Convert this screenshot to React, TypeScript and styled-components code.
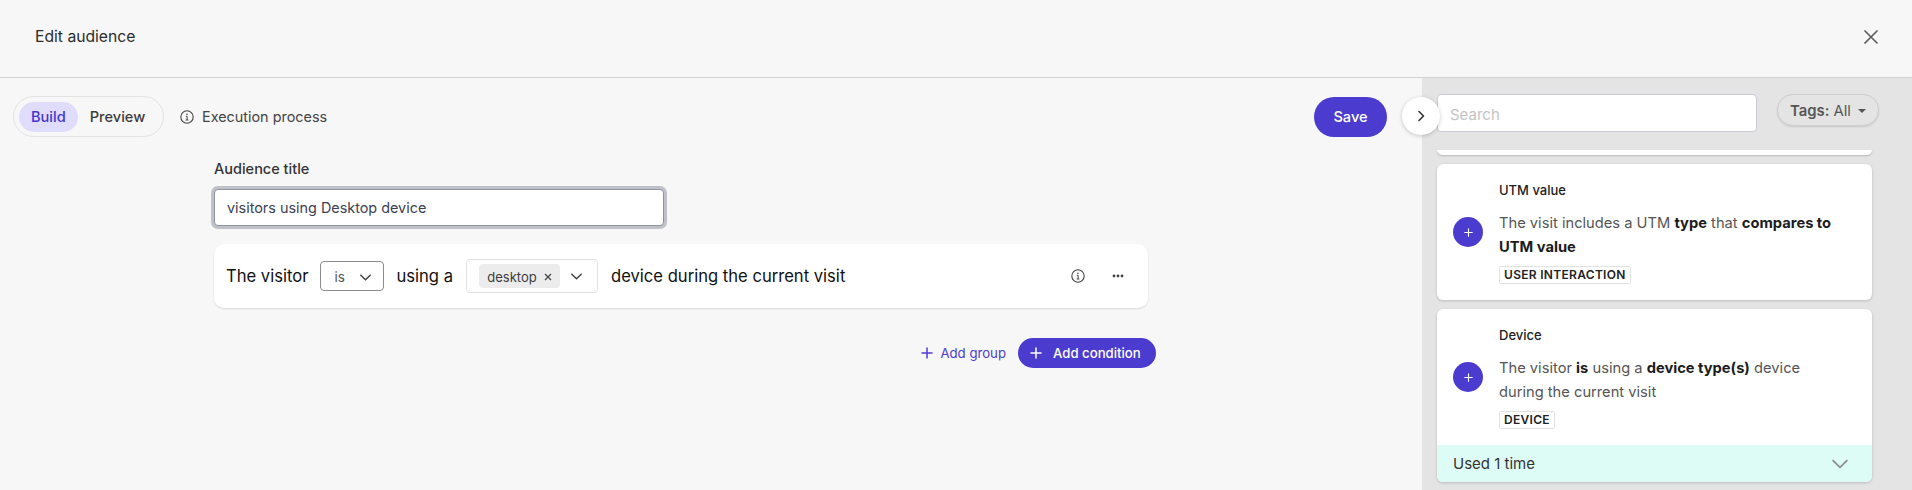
import React from "react";
import styled, { createGlobalStyle } from "styled-components";

const Global = createGlobalStyle`
  html, body { margin: 0; padding: 0; background: #f7f7f7; }
  * { box-sizing: border-box; }
  body { font-family: Inter, "Liberation Sans", sans-serif; color: #1f1f1f; }
`;

const Page = styled.div`
  width: 1912px; height: 490px; overflow: hidden; display: flex; flex-direction: column; background: #f7f7f7;
`;
const Header = styled.header`
  height: 78px; flex: none; display: flex; align-items: center; justify-content: space-between;
  padding: 0 33px 3px 35px; border-bottom: 1px solid #d2d2d2;
`;
const Title = styled.h1`
  margin: 0; font-size: 15.7px; font-weight: 400; line-height: 24px; color: #2c2c2c;
`;
const IconButton = styled.button`
  border: 0; background: none; padding: 0; display: flex; align-items: center; justify-content: center; cursor: pointer;
`;
const Body = styled.div`
  flex: 1; display: flex; min-height: 0;
`;
const Main = styled.main`
  flex: 1; position: relative; padding: 18px 35px 0 13px; min-width: 0;
`;
const Toolbar = styled.div`
  display: flex; align-items: center; height: 41px;
`;
const Toggle = styled.div`
  width: 151px; height: 41px; border: 1px solid #e3e3e3; border-radius: 21px; padding: 5px; display: flex; align-items: center;
`;
const ToggleItem = styled.span<{ $active?: boolean }>`
  height: 30px; padding: 0 12px; border-radius: 15px; display: flex; align-items: center; font-size: 14.6px; font-weight: 500;
  background: ${p => (p.$active ? "#e0dcfb" : "transparent")};
  color: ${p => (p.$active ? "#4435cf" : "#3c3c3c")};
`;
const ExecLink = styled.span`
  margin-left: 16px; display: flex; align-items: center; gap: 8px; font-size: 14.4px; color: #454545;
`;
const SaveButton = styled.button`
  margin-left: auto; width: 73px; height: 40px; border: 0; border-radius: 20px; background: #4c3bcf; color: #fff;
  font: 500 14.6px Inter, sans-serif;
`;
const Content = styled.div`
  margin: 22px 0 0 201px; width: 942px;
`;
const Label = styled.label`
  display: block; font-size: 14.5px; font-weight: 500; line-height: 20px; color: #333;
`;
const TitleInput = styled.div`
  margin-top: 10px; width: 450px; height: 37px; padding-left: 12px; display: flex; align-items: center;
  background: #fff; border: 1px solid #8e93a0; border-radius: 4px; box-shadow: 0 0 0 3px #c0c1c8; font-size: 14.4px; color: #3a4152;
`;
const ConditionCard = styled.div`
  margin-top: 18px; width: 934px; height: 64px; background: #fff; border-radius: 10px; box-shadow: 0 1px 2px rgba(0,0,0,.12);
  display: flex; align-items: center; padding: 0 24px 0 12px; font-size: 16.6px; color: #111;
`;
const Word = styled.span`
  white-space: nowrap;
`;
const SelectBox = styled.div`
  margin: 0 12px; width: 64px; height: 30px; padding: 2px 10px 0 13px; border: 1px solid #8a8a8a; border-radius: 4px;
  display: flex; align-items: center; justify-content: space-between; font-size: 13.5px; color: #555;
`;
const MultiBox = styled.div`
  margin: 0 13px; width: 132px; height: 34px; padding: 0 13px 0 12px; border: 1px solid #e2e2e2; border-radius: 4px;
  display: flex; align-items: center; justify-content: space-between;
`;
const Chip = styled.span`
  width: 81px; height: 24px; padding-top: 1px; background: #ececec; border-radius: 4px; display: flex; align-items: center; justify-content: center; gap: 7px;
  font-size: 13px; color: #3c3c3c;
`;
const CardActions = styled.div`
  margin-left: auto; display: flex; align-items: center; gap: 27px;
`;
const AddRow = styled.div`
  margin-top: 30px; width: 942px; display: flex; justify-content: flex-end; align-items: center; gap: 12px;
`;
const AddGroup = styled.span`
  display: flex; align-items: center; gap: 7px; font-size: 13.2px; color: #4c3bcf;
`;
const AddCondition = styled.button`
  width: 138px; height: 30px; border: 0; border-radius: 15px; background: #4c3bcf; color: #fff; display: flex; align-items: center; padding: 0 0 0 12px; gap: 11px;
  font: 500 13.2px Inter, sans-serif;
`;
const Collapse = styled.button`
  position: absolute; top: 19px; right: -18px; width: 38px; height: 38px; border: 0; border-radius: 50%; background: #fff; z-index: 2;
  box-shadow: 0 1px 4px rgba(0,0,0,.2); display: flex; align-items: center; justify-content: center; color: #333; padding: 0;
`;
const Aside = styled.aside`
  width: 490px; flex: none; background: #e4e4e4; padding: 16px 40px 0 15px; display: flex; flex-direction: column; overflow: hidden;
`;
const SearchRow = styled.div`
  display: flex; align-items: flex-start; justify-content: space-between; margin-right: -7px;
`;
const SearchInput = styled.div`
  width: 320px; height: 38px; background: #fff; border: 1px solid #c9ccd2; border-radius: 4px; padding: 2px 12px 0; display: flex; align-items: center;
  font-size: 15px; color: #c4c4c4;
`;
const TagsButton = styled.div`
  width: 102px; height: 32px; padding-top: 1px; border: 1px solid #cfcfcf; border-radius: 16px; background: #e4e4e4; box-shadow: 0 1px 2px rgba(0,0,0,.12);
  display: flex; align-items: center; justify-content: center; gap: 7px; font-size: 14.8px; color: #555;
  b { font-weight: 600; }
`;
const Caret = styled.i`
  width: 0; height: 0; border-left: 4px solid transparent; border-right: 4px solid transparent; border-top: 4px solid #555;
`;
const List = styled.div`
  margin-top: 18px; display: flex; flex-direction: column; gap: 9px;
`;
const Sliver = styled.div`
  height: 5px; background: #fff; border-radius: 0 0 6px 6px; box-shadow: 0 1px 2px rgba(0,0,0,.2);
`;
const Card = styled.article`
  background: #fff; border-radius: 6px; box-shadow: 0 1px 3px rgba(0,0,0,.18); overflow: hidden;
`;
const CardMain = styled.div`
  display: flex; align-items: center; padding: 16px 37px 16px 16px; gap: 16px;
`;
const AddCircle = styled.span`
  width: 30px; height: 30px; flex: none; border-radius: 50%; background: #4c3bcf; display: flex; align-items: center; justify-content: center;
`;
const CardText = styled.div`
  flex: 1; min-width: 0;
`;
const CardTitle = styled.div`
  font-size: 13px; font-weight: 500; line-height: 20px; color: #222;
`;
const CardDesc = styled.p`
  margin: 11px 0 0; font-size: 14.7px; line-height: 24px; color: #555;
  b { font-weight: 700; color: #1c1c1c; }
`;
const Tag = styled.span`
  display: inline-block; margin-top: 7px; height: 18px; padding: 0 4px; border: 1px solid #e2e2e2; border-radius: 2px;
  font-size: 12px; font-weight: 600; line-height: 16px; letter-spacing: .3px; color: #222; vertical-align: top;
`;
const UsedBar = styled.div`
  height: 37px; background: #ddfcf6; display: flex; align-items: center; justify-content: space-between; padding: 0 21px 0 16px;
  font-size: 15px; color: #333;
`;

const Chevron = ({ size = 16, color = "#444", width = 1.6 }: { size?: number; color?: string; width?: number }) => (
  <svg width={size} height={size} viewBox="0 0 16 16" fill="none" stroke={color} strokeWidth={width} strokeLinecap="round" strokeLinejoin="round">
    <path d="M3 5.5 8 10.5 13 5.5" />
  </svg>
);
const Plus = ({ size = 12, color = "#fff", width = 1.5 }: { size?: number; color?: string; width?: number }) => (
  <svg width={size} height={size} viewBox="0 0 12 12" fill="none" stroke={color} strokeWidth={width} strokeLinecap="round">
    <path d="M6 1v10M1 6h10" />
  </svg>
);
const Cross = () => (
  <svg width="8" height="8" viewBox="0 0 8 8" fill="none" stroke="#444" strokeWidth="1.2">
    <path d="M1 1 7 7M7 1 1 7" />
  </svg>
);
const Info = ({ size = 14, color = "#444" }: { size?: number; color?: string }) => (
  <svg width={size} height={size} viewBox="0 0 14 14" fill="none" stroke={color} strokeWidth="1.1">
    <circle cx="7" cy="7" r="6.2" />
    <path d="M5.9 6.3H7.1V10M5.7 10H8.4" strokeWidth="1" />
    <circle cx="7" cy="4.2" r=".8" fill={color} stroke="none" />
  </svg>
);

export default function App() {
  return (
    <Page>
      <Global />
      <Header>
        <Title>Edit audience</Title>
        <IconButton aria-label="Close">
          <svg width="16" height="16" viewBox="0 0 16 16" fill="none" stroke="#5a5a5a" strokeWidth="1.6">
            <path d="M1.5 1.5 14.5 14.5M14.5 1.5 1.5 14.5" />
          </svg>
        </IconButton>
      </Header>
      <Body>
        <Main>
          <Toolbar>
            <Toggle>
              <ToggleItem $active>Build</ToggleItem>
              <ToggleItem>Preview</ToggleItem>
            </Toggle>
            <ExecLink><Info />Execution process</ExecLink>
            <SaveButton>Save</SaveButton>
          </Toolbar>
          <Collapse aria-label="Collapse">
            <svg width="14" height="14" viewBox="0 0 14 14" fill="none" stroke="#333" strokeWidth="1.6" strokeLinecap="round" strokeLinejoin="round">
              <path d="M5 2.5 9.5 7 5 11.5" />
            </svg>
          </Collapse>
          <Content>
            <Label>Audience title</Label>
            <TitleInput>visitors using Desktop device</TitleInput>
            <ConditionCard>
              <Word>The visitor</Word>
              <SelectBox>is<Chevron size={15} /></SelectBox>
              <Word>using a</Word>
              <MultiBox>
                <Chip>desktop<Cross /></Chip>
                <Chevron size={15} />
              </MultiBox>
              <Word>device during the current visit</Word>
              <CardActions>
                <Info color="#444" />
                <svg width="12" height="4" viewBox="0 0 12 4" fill="#444">
                  <circle cx="2" cy="2" r="1.4" /><circle cx="6" cy="2" r="1.4" /><circle cx="10" cy="2" r="1.4" />
                </svg>
              </CardActions>
            </ConditionCard>
            <AddRow>
              <AddGroup><Plus color="#4c3bcf" />Add group</AddGroup>
              <AddCondition><Plus />Add condition</AddCondition>
            </AddRow>
          </Content>
        </Main>
        <Aside>
          <SearchRow>
            <SearchInput>Search</SearchInput>
            <TagsButton><span><b>Tags:</b> All</span><Caret /></TagsButton>
          </SearchRow>
          <List>
            <Sliver />
            <Card>
              <CardMain>
                <AddCircle><Plus size={9} /></AddCircle>
                <CardText>
                  <CardTitle>UTM value</CardTitle>
                  <CardDesc>The visit includes a UTM <b>type</b> that <b>compares to UTM value</b></CardDesc>
                  <Tag>USER INTERACTION</Tag>
                </CardText>
              </CardMain>
            </Card>
            <Card>
              <CardMain>
                <AddCircle><Plus size={9} /></AddCircle>
                <CardText>
                  <CardTitle>Device</CardTitle>
                  <CardDesc>The visitor <b>is</b> using a <b>device type(s)</b> device during the current visit</CardDesc>
                  <Tag>DEVICE</Tag>
                </CardText>
              </CardMain>
              <UsedBar>Used 1 time<Chevron size={22} color="#8f8f8f" width={1.3} /></UsedBar>
            </Card>
          </List>
        </Aside>
      </Body>
    </Page>
  );
}
